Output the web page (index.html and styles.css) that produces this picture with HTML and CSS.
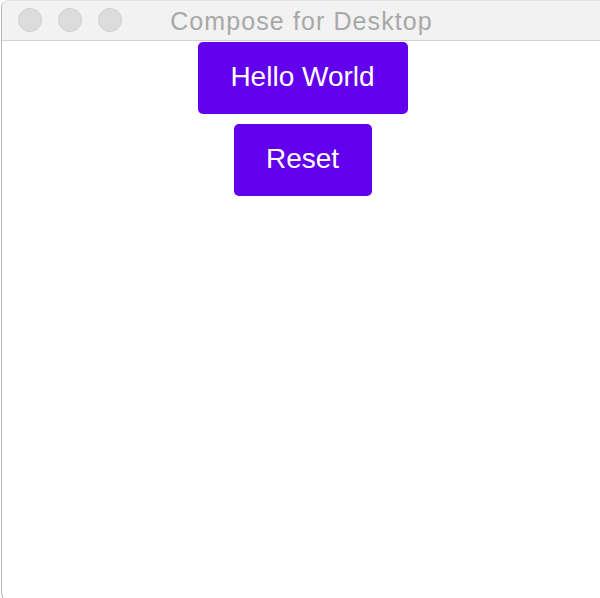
FILE: index.html
```html
<!DOCTYPE html>
<html>
<head>
<meta charset="utf-8">
<link rel="stylesheet" href="styles.css">
</head>
<body>
<div class="window">
  <div class="titlebar">
    <div class="lights">
      <span class="light"></span>
      <span class="light"></span>
      <span class="light"></span>
    </div>
    <div class="title">Compose for Desktop</div>
  </div>
  <div class="content">
    <button class="btn btn-hello">Hello World</button>
    <button class="btn btn-reset">Reset</button>
  </div>
</div>
</body>
</html>
```

FILE: styles.css
```css
html, body {
  margin: 0;
  padding: 0;
  background: #ffffff;
  overflow: hidden;
  width: 600px;
  height: 598px;
}
.window {
  margin-left: 1px;
  width: 602px;
  height: 600px;
  box-sizing: border-box;
  border-left: 1px solid #b8b8b8;
  border-top: 1px solid #e2e2e2;
  border-bottom: 1px solid #c4c4c4;
  border-radius: 7px 0 0 7px;
  overflow: hidden;
  background: #ffffff;
  font-family: "Liberation Sans", Arial, sans-serif;
}
.titlebar {
  position: relative;
  height: 39px;
  background: #f2f2f2;
  border-bottom: 1px solid #d2d2d2;
  display: flex;
  align-items: center;
  justify-content: center;
}
.lights {
  position: absolute;
  left: 16px;
  top: 7px;
  display: flex;
  gap: 16px;
}
.light {
  width: 22px;
  height: 22px;
  border-radius: 50%;
  background: #dcdcdc;
  border: 1px solid #d0d0d0;
}
.title {
  font-size: 25px;
  letter-spacing: 1.1px;
  color: #a8a8a8;
  margin-top: 2px;
  padding-right: 2px;
}
.content {
  display: flex;
  flex-direction: column;
  align-items: center;
  gap: 10px;
  padding-top: 1px;
}
.btn {
  font-family: "Liberation Sans", Arial, sans-serif;
  font-size: 28px;
  color: #ffffff;
  background: #6200ee;
  border: none;
  border-radius: 5px;
  height: 72px;
  line-height: 68px;
  padding: 0 0 3px;
  box-sizing: border-box;
}
.btn-hello {
  width: 210px;
}
.btn-reset {
  width: 138px;
}
```
